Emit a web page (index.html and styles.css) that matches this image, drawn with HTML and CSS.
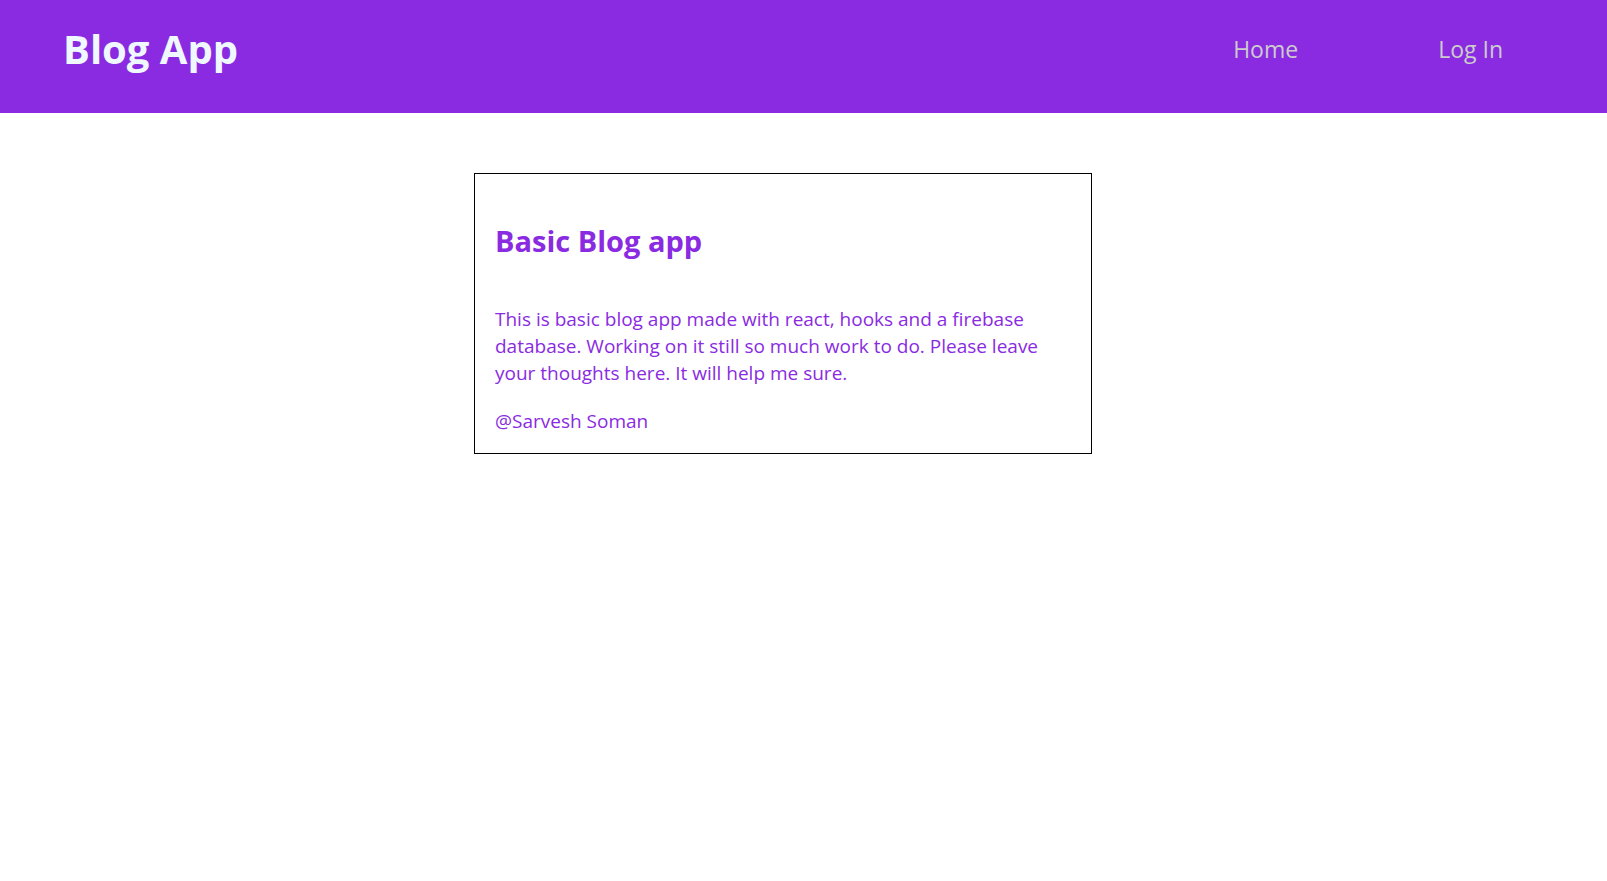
FILE: index.html
```html
<!DOCTYPE html>
<html lang="en">
<head>
<meta charset="utf-8">
<title>Blog App</title>
<link rel="stylesheet" href="styles.css">
</head>
<body>
<header class="topbar">
  <div class="brand">Blog App</div>
  <nav class="nav">
    <a class="nav-link" href="#">Home</a>
    <a class="nav-link" href="#">Log In</a>
  </nav>
</header>
<main class="content">
  <article class="card">
    <h1 class="card-title">Basic Blog app</h1>
    <p class="card-text">This is basic blog app made with react, hooks and a firebase database. Working on it still so much work to do. Please leave your thoughts here. It will help me sure.</p>
    <p class="card-author">@Sarvesh Soman</p>
  </article>
</main>
</body>
</html>
```
FILE: styles.css
```css
html, body {
  margin: 0;
  padding: 0;
  background: #ffffff;
  font-family: "Open Sans", "Noto Sans", sans-serif;
}

.topbar {
  display: flex;
  justify-content: space-between;
  align-items: flex-start;
  height: 113px;
  box-sizing: border-box;
  padding: 0 104px 0 63px;
  background: #8a2be2;
}

.brand {
  margin-top: 23px;
  font-size: 40px;
  line-height: 52px;
  font-weight: 700;
  color: #f0f8ff;
}

.nav {
  display: flex;
  gap: 140px;
  margin-top: 33px;
}

.nav-link {
  font-size: 23px;
  line-height: 32px;
  color: #cccccc;
  text-decoration: none;
}

.content {
  padding-top: 60px;
  padding-left: 474px;
}

.card {
  width: 618px;
  box-sizing: border-box;
  border: 1px solid #000000;
  padding: 20px 20px 18px;
  color: #8a2be2;
}

.card-title {
  margin: 28px 0 46px;
  font-size: 29px;
  line-height: 38px;
  font-weight: 700;
}

.card-text {
  margin: 0;
  font-size: 19px;
  line-height: 27px;
}

.card-author {
  margin: 21px 0 0;
  font-size: 19px;
  line-height: 27px;
}
```
